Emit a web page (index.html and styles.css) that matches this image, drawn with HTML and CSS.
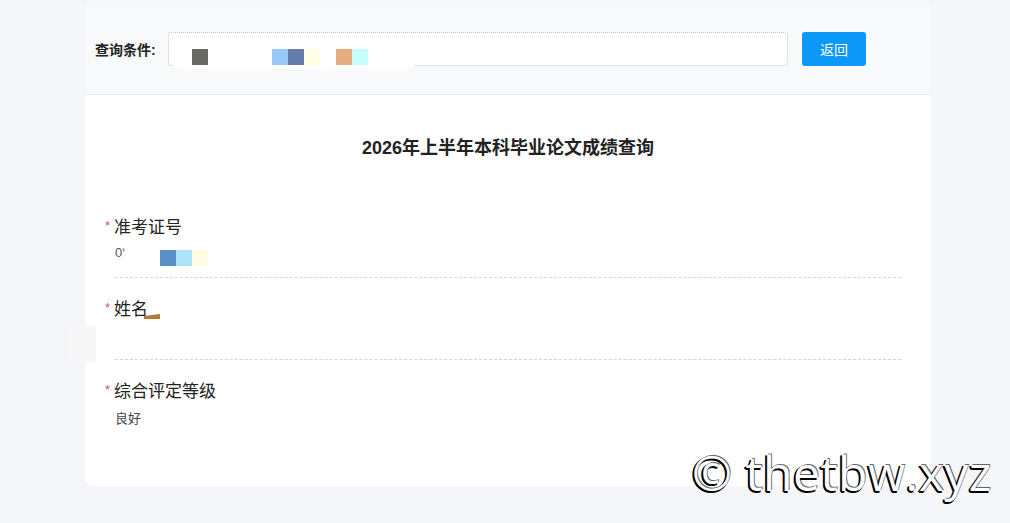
FILE: index.html
```html
<!DOCTYPE html>
<html lang="zh">
<head>
<meta charset="utf-8">
<title>成绩查询</title>
<link rel="stylesheet" href="styles.css">
</head>
<body>
<div class="card">
  <div class="search">
    <span class="search-label">查询条件:</span>
    <div class="search-input">
      <div class="mask">
        <span class="px c1 gap1"></span>
        <span class="px c2 gap2"></span><span class="px c3"></span><span class="px c4"></span>
        <span class="px c5 gap3"></span><span class="px c6"></span>
      </div>
    </div>
    <button class="btn">返回</button>
  </div>
  <div class="content">
    <h1 class="title">2026年上半年本科毕业论文成绩查询</h1>
    <div class="field">
      <div class="label"><span class="req">*</span>准考证号</div>
      <div class="value value-id"><span class="partial">0‘</span><span class="px d1"></span><span class="px d2"></span><span class="px d3"></span></div>
    </div>
    <div class="field">
      <div class="label"><span class="req">*</span>姓名<span class="smudge"></span></div>
      <div class="value"></div>
    </div>
    <div class="field last">
      <div class="label"><span class="req">*</span>综合评定等级</div>
      <div class="value">良好</div>
    </div>
  </div>
  <div class="side-patch"></div>
</div>
<div class="watermark">© thetbw.xyz</div>
</body>
</html>
```

FILE: styles.css
```css
html, body {
  margin: 0;
  padding: 0;
}
body {
  background: #f5f6fa;
  font-family: "Liberation Sans", "Noto Sans CJK SC", sans-serif;
  color: #333;
  width: 1010px;
  height: 523px;
  position: relative;
  overflow: hidden;
}
.card {
  position: relative;
  margin: 2px 0 0 85px;
  width: 846px;
  height: 484px;
  background: #fff;
  border-radius: 8px;
}
.search {
  height: 93px;
  background: #f8f9fb;
  border-bottom: 1px solid #e9ecf1;
  border-radius: 8px 8px 0 0;
  display: flex;
  align-items: center;
  padding-left: 10px;
  box-sizing: border-box;
}
.search-label {
  font-size: 14px;
  font-weight: bold;
  color: #222;
  width: 73px;
  margin-top: 2px;
}
.search-input {
  width: 620px;
  height: 34px;
  box-sizing: border-box;
  border: 1px dotted #c4c6ca;
  border-radius: 3px;
  background: #fff;
  position: relative;
  margin-top: 1px;
}
.mask {
  position: absolute;
  left: 2px;
  top: 2px;
  width: 246px;
  height: 34px;
  background: #fff;
  border-radius: 0 0 10px 10px;
  display: flex;
  align-items: center;
}
.px {
  display: inline-block;
  width: 16px;
  height: 16px;
}
.c1 { background: #666864; }
.c2 { background: #99c9f9; }
.c3 { background: #657dad; }
.c4 { background: #fefee3; }
.c5 { background: #e4ae80; }
.c6 { background: #c6fefd; }
.gap1 { margin-left: 21px; }
.gap2 { margin-left: 64px; }
.gap3 { margin-left: 16px; }
.mask .px { margin-top: 10px; }
.btn {
  margin-left: 14px;
  width: 64px;
  height: 34px;
  border: none;
  border-radius: 3px;
  background: #0c98f6;
  color: #fff;
  font-size: 14px;
  font-family: "Liberation Sans", "Noto Sans CJK SC", sans-serif;
  margin-top: 1px;
  padding: 0;
}
.content {
  padding: 40px 30px 0 20px;
}
.title {
  margin: 0 0 56px;
  text-align: center;
  font-size: 18px;
  font-weight: bold;
  color: #222;
  line-height: 26px;
  padding-left: 10px;
}
.field {
  margin-bottom: 21px;
}
.label {
  font-size: 17px;
  line-height: 22px;
  color: #222;
  display: flex;
  align-items: flex-start;
  position: relative;
}
.req {
  color: #e0525a;
  font-size: 13px;
  width: 9px;
  line-height: 18px;
}
.value {
  margin-left: 10px;
  height: 39px;
  border-bottom: 1px dashed #d4d6da;
  font-size: 13px;
  color: #444;
  line-height: 24px;
  padding-top: 2px;
  box-sizing: border-box;
}
.field.last .value {
  border-bottom: none;
  padding-top: 4px;
}
.value-id {
  display: flex;
  align-items: flex-start;
}
.partial {
  color: #555;
  width: 45px;
}
.value-id .px { margin-top: 9px; }
.d1 { background: #5b8ec6; }
.d2 { background: #aee4fb; }
.d3 { background: #fefde4; }
.smudge {
  display: inline-block;
  width: 16px;
  height: 5px;
  background: #b57a39;
  margin-top: 15px;
  margin-left: -4px;
  clip-path: polygon(0 40%, 100% 0, 100% 100%, 0 100%);
}
.side-patch {
  position: absolute;
  left: -17px;
  top: 324px;
  width: 28px;
  height: 36px;
  background: #f7f7f7;
}
.watermark {
  position: absolute;
  left: 692px;
  top: 443px;
  font-family: "Open Sans", sans-serif;
  font-size: 48px;
  line-height: 60px;
  letter-spacing: 0.5px;
  color: #fff;
  text-shadow: -1px 1px 0 #000, -2px 1px 0 #000, -1px 2px 0 #000, 1px -1px 0 rgba(0,0,0,0.6);
  white-space: nowrap;
}
```
